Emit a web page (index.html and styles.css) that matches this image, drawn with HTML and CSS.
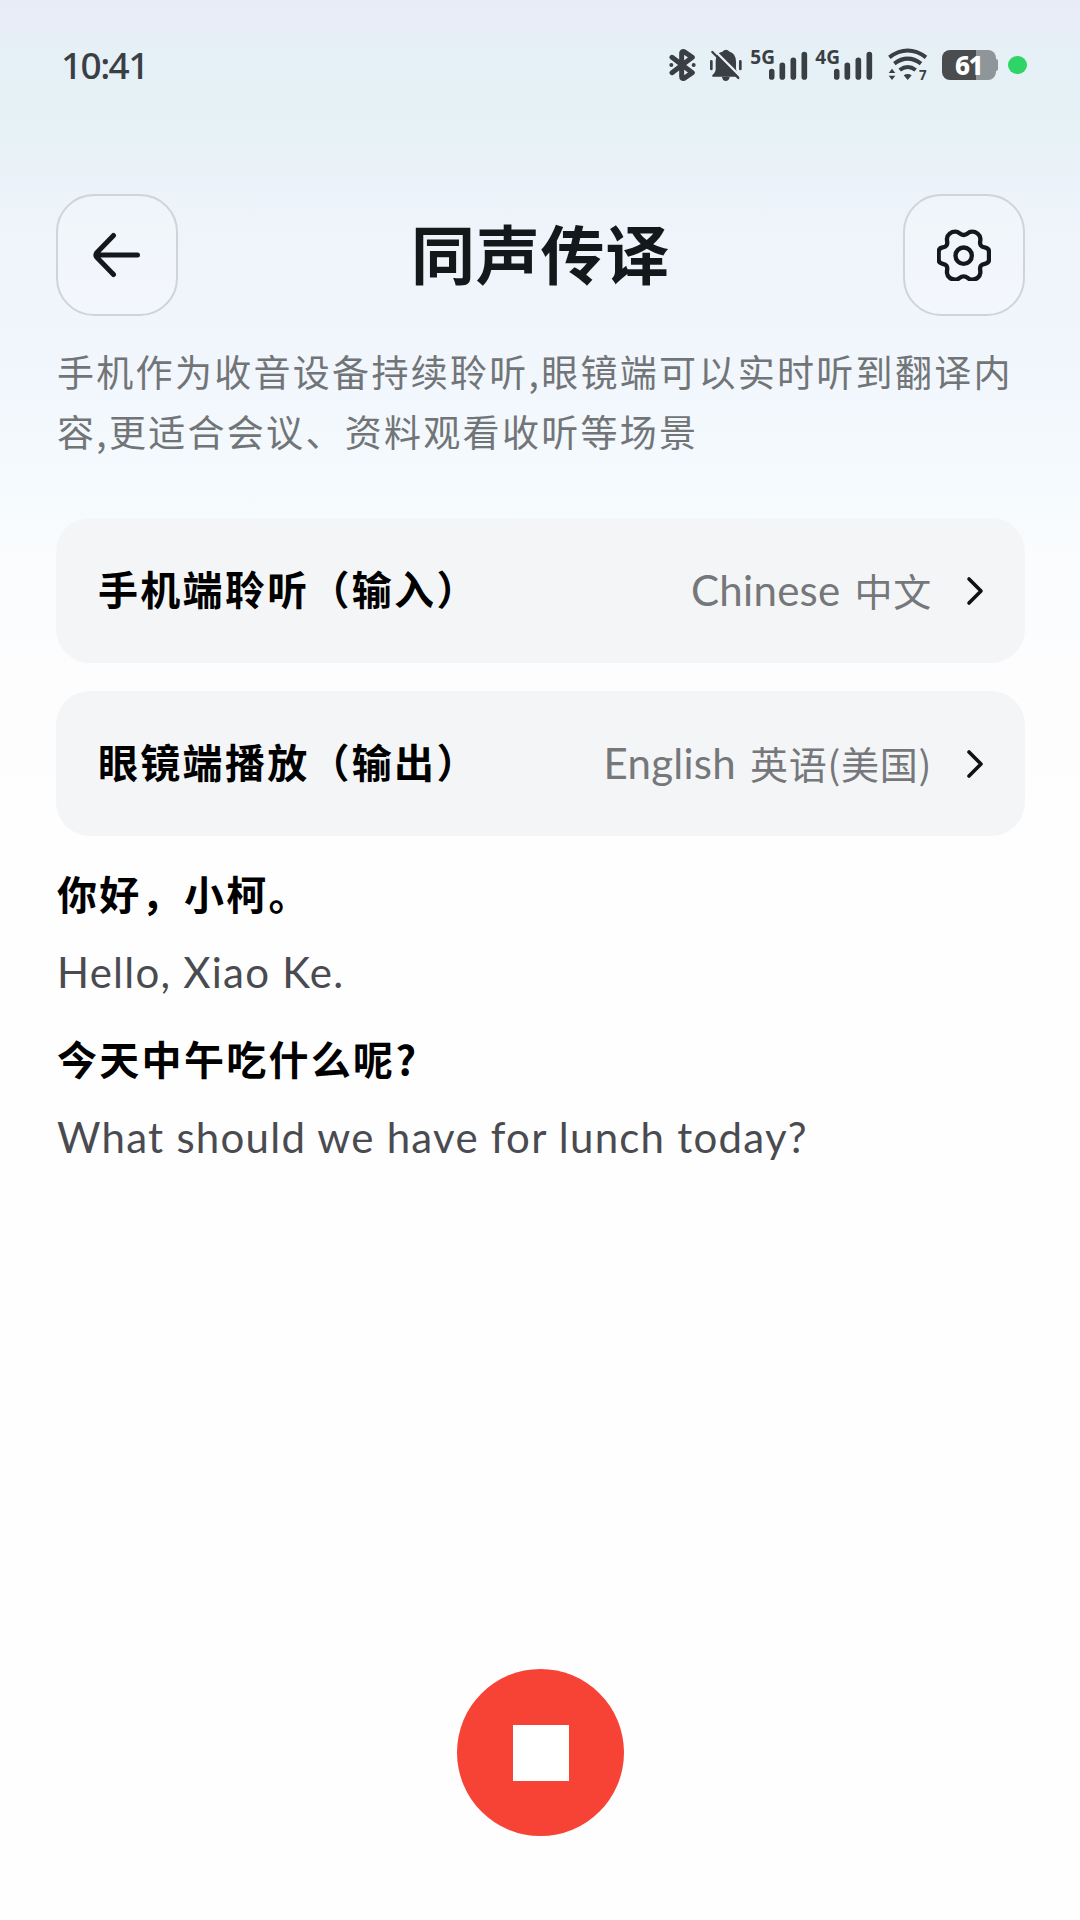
FILE: index.html
```html
<!DOCTYPE html>
<html lang="zh-CN">
  <head>
    <meta charset="utf-8">
    <meta name="viewport" content="width=device-width, initial-scale=1">
    <title>同声传译</title>
    <link rel="stylesheet" href="styles.css">
  </head>
  <body>
    <div class="screen">
      <div class="statusbar">
        <div class="time">10:41</div>
        <div class="icons">
          <svg class="bluetooth" viewBox="55 55 82 96" width="27.33" height="32">
            <path d="M64 80 L125 126 L100 143 Q93 145 93 138 V68 Q93 61 100 63 L125 80 L64 126" fill="none" stroke="#3a3f44" stroke-width="15" stroke-linecap="round" stroke-linejoin="round"/>
            <circle cx="62" cy="103" r="6" fill="#3a3f44"/>
            <circle cx="129" cy="103" r="6" fill="#3a3f44"/>
          </svg>
          <svg class="bell" viewBox="180 55 95 96" width="31.67" height="32">
            <path d="M187 133 Q197 126 197 116 V92 Q198 67 217 63 Q228 52 239 63 Q257 68 258 92 V116 Q259 126 269 133 V138 H187 Z" fill="#3a3f44"/>
            <path d="M216 138 H239 Q237 151 227 151 Q218 151 216 138 Z" fill="#3a3f44"/>
            <path d="M184 92 V115 M271 92 V115" stroke="#3a3f44" stroke-width="8" stroke-linecap="round"/>
            <path d="M192 58 L272 138" stroke="#e8f0f6" stroke-width="7"/>
            <path d="M187 64 L265 142" stroke="#3a3f44" stroke-width="7" stroke-linecap="round"/>
          </svg>
          <div class="signal">
            <span>5G</span>
            <svg viewBox="357 55 115 96" width="38.33" height="32">
              <path d="M365 123 V139 M397 104 V139 M430 89 V139 M463 72 V139" stroke="#3a3f44" stroke-width="17" stroke-linecap="round"/>
            </svg>
          </div>
          <div class="signal signal2">
            <span>4G</span>
            <svg viewBox="552 55 115 96" width="38.33" height="32">
              <path d="M560 123 V139 M592 104 V139 M625 89 V139 M658 72 V139" stroke="#3a3f44" stroke-width="17" stroke-linecap="round"/>
            </svg>
          </div>
          <svg class="wifi" viewBox="714 55 120 96" width="40" height="32">
            <path d="M718 80 Q773 39 828 80" fill="none" stroke="#3a3f44" stroke-width="12"/>
            <path d="M733 99 Q773 69 813 99" fill="none" stroke="#3a3f44" stroke-width="12"/>
            <path d="M749 118 Q773 100 797 118" fill="none" stroke="#3a3f44" stroke-width="12"/>
            <path d="M761 134 Q773 126 785 134 L773 148 Z" fill="#3a3f44"/>
            <path d="M716 127 L726 114 L736 127 Z M716 135 L726 148 L736 135 Z" fill="#3a3f44"/>
            <text x="807" y="149" class="seven">7</text>
          </svg>
          <div class="battery"><b>61</b></div>
          <i class="dot"></i>
        </div>
      </div>

      <div class="header">
        <div class="btn">
          <svg viewBox="0 0 48 48" width="48" height="48">
            <path d="M44.500 24 H4 M20.500 4.500 L3.500 22 Q2.200 24 3.500 26 L20.500 43.500" fill="none" stroke="#15181b" stroke-width="5" stroke-linecap="round" stroke-linejoin="round"/>
          </svg>
        </div>
        <h1>同声传译</h1>
        <div class="btn">
          <svg viewBox="174 145 162 158" width="54" height="52.67">
            <path d="M254 163 C267 163 265 153 279 153 C292 153 303 162 304 173 C305 184 300 187 306 195 C312 204 330 196 330 213 V237 C330 254 312 246 306 255 C300 263 305 266 304 277 C303 288 292 297 279 297 C265 297 267 287 254 287 C241 287 243 297 229 297 C216 297 205 288 204 277 C203 266 208 263 202 255 C196 246 179 254 179 237 V213 C179 196 196 204 202 195 C208 187 203 184 204 173 C205 162 216 153 229 153 C243 153 241 163 254 163 Z" fill="none" stroke="#15181b" stroke-width="13" stroke-linejoin="round"/>
            <circle cx="254" cy="225" r="24.500" fill="none" stroke="#15181b" stroke-width="13"/>
          </svg>
        </div>
      </div>

      <p class="desc">手机作为收音设备持续聆听,眼镜端可以实时听到翻译内<br>容,更适合会议、资料观看收听等场景</p>

      <div class="cards">
        <div class="card">
          <div class="label">手机端聆听（输入）</div>
          <div class="value"><span class="en">Chinese</span>中文</div>
          <svg viewBox="0 0 18 30" width="18" height="30">
            <path d="M3 3 L15 15 L3 27" fill="none" stroke="#111" stroke-width="3.600" stroke-linecap="round" stroke-linejoin="round"/>
          </svg>
        </div>
        <div class="card">
          <div class="label">眼镜端播放（输出）</div>
          <div class="value"><span class="en">English</span>英语(美国)</div>
          <svg viewBox="0 0 18 30" width="18" height="30">
            <path d="M3 3 L15 15 L3 27" fill="none" stroke="#111" stroke-width="3.600" stroke-linecap="round" stroke-linejoin="round"/>
          </svg>
        </div>
      </div>

      <div class="talk">
        <p class="source">你好，小柯。</p>
        <p class="result">Hello, Xiao Ke.</p>
        <p class="source">今天中午吃什么呢?</p>
        <p class="result">What should we have for lunch today?</p>
      </div>

      <div class="stop"><i></i></div>
    </div>
  </body>
</html>
```
FILE: styles.css
```css
* {
    margin: 0;
    padding: 0;
    box-sizing: border-box;
}
body {
    background: #fefefe;
    font-family: "Noto Sans CJK SC", sans-serif;
}
.screen {
    width: 1080px;
    height: 1920px;
    padding: 0 55px 0 56px;
    display: flex;
    flex-direction: column;
    overflow: hidden;
    background: linear-gradient(#e9ebf6 0, #e6f0f7 50px, #e6f2f6 130px, #ebf2f9 185px, #eef4fa 230px, #f0f5fc 290px, #f1f7fc 380px, #f4fafd 490px, #fafcfe 550px, #fdfdfe 680px, #fefefe 850px);
}

/* status bar */
.statusbar {
    height: 130px;
    padding: 0 0 0 5px;
    display: flex;
    align-items: center;
    justify-content: space-between;
    flex: none;
}
.time {
    padding-bottom: 1px;
    font-family: "Noto Sans", sans-serif;
    font-weight: 500;
    font-size: 37px;
    line-height: 40px;
    letter-spacing: -1.600px;
    color: #3a3f44;
}
.icons {
    height: 32px;
    display: flex;
    align-items: center;
    margin-right: -2px;
}
.bell {
    margin-left: 14.300px;
}
.signal {
    position: relative;
    width: 56.300px;
    height: 32px;
    margin-left: 9.300px;
    display: flex;
    justify-content: flex-end;
}
.signal2 {
    margin-left: 8.700px;
}
.signal span {
    position: absolute;
    left: -1px;
    top: -2px;
    font: bold 19px/20px "Noto Sans", sans-serif;
    color: #3a3f44;
}
.wifi {
    margin-left: 15.700px;
    overflow: visible;
}
.seven {
    font: bold 40px "Noto Sans", sans-serif;
    fill: #3a3f44;
}
.battery {
    position: relative;
    width: 54px;
    height: 30px;
    margin-left: 13.300px;
    border-radius: 8px;
    background: linear-gradient(90deg, #4b4c4e 34px, #8f9699 34px);
    text-align: center;
}
.battery:after {
    content: "";
    position: absolute;
    right: -2px;
    top: 9px;
    width: 2px;
    height: 12px;
    border-radius: 0 2px 2px 0;
    background: #8f9699;
}
.battery b {
    display: block;
    font: 800 26px/30px "Noto Sans", sans-serif;
    letter-spacing: -1.500px;
    color: #fff;
}
.dot {
    width: 18.700px;
    height: 18.700px;
    margin-left: 12.700px;
    border-radius: 50%;
    background: #2fd466;
}

/* title row */
.header {
    margin-top: 64px;
    display: flex;
    align-items: center;
    justify-content: space-between;
}
.btn {
    width: 122px;
    height: 122px;
    display: flex;
    align-items: center;
    justify-content: center;
    border: 2px solid #d0d3d9;
    border-radius: 38px;
    background: rgba(250, 251, 254, .25);
}
h1 {
    padding: 0 0 8px;
    font-size: 64px;
    line-height: 100px;
    letter-spacing: .8px;
    color: #15181b;
}
.desc {
    margin-top: 26px;
    padding-left: 1px;
    font-size: 37px;
    line-height: 59.500px;
    letter-spacing: 2.300px;
    white-space: nowrap;
    color: #727578;
}

/* language rows */
.cards {
    margin-top: 57px;
    display: grid;
    gap: 28px;
}
.card {
    height: 145px;
    padding: 0 41px 0 42px;
    display: flex;
    align-items: center;
    border-radius: 34px;
    background: #f4f5f7;
}
.label {
    padding-bottom: 5px;
    font-size: 40px;
    font-weight: bold;
    letter-spacing: 2.300px;
    color: #000;
}
.value {
    margin-left: auto;
    margin-right: 34px;
    padding-bottom: 3px;
    font-size: 38px;
    letter-spacing: .7px;
    color: #75777a;
}
.en {
    margin-right: 14px;
    font-family: Lato, sans-serif;
    font-size: 42px;
    letter-spacing: .3px;
}

/* transcript */
.talk {
    margin-top: 27px;
    padding-left: 1px;
}
.source {
    font-size: 40px;
    font-weight: bold;
    line-height: 60px;
    letter-spacing: 2.300px;
    color: #000;
}
.result {
    margin: 19px 0 26px;
    font-family: Lato, sans-serif;
    font-size: 42px;
    line-height: 60px;
    letter-spacing: 1.250px;
    color: #4a4b50;
}
.stop {
    width: 167px;
    height: 167px;
    margin: auto auto 84px;
    display: flex;
    align-items: center;
    justify-content: center;
    border-radius: 50%;
    background: #f74336;
}
.stop i {
    width: 56px;
    height: 56px;
    background: #fff;
}
```
